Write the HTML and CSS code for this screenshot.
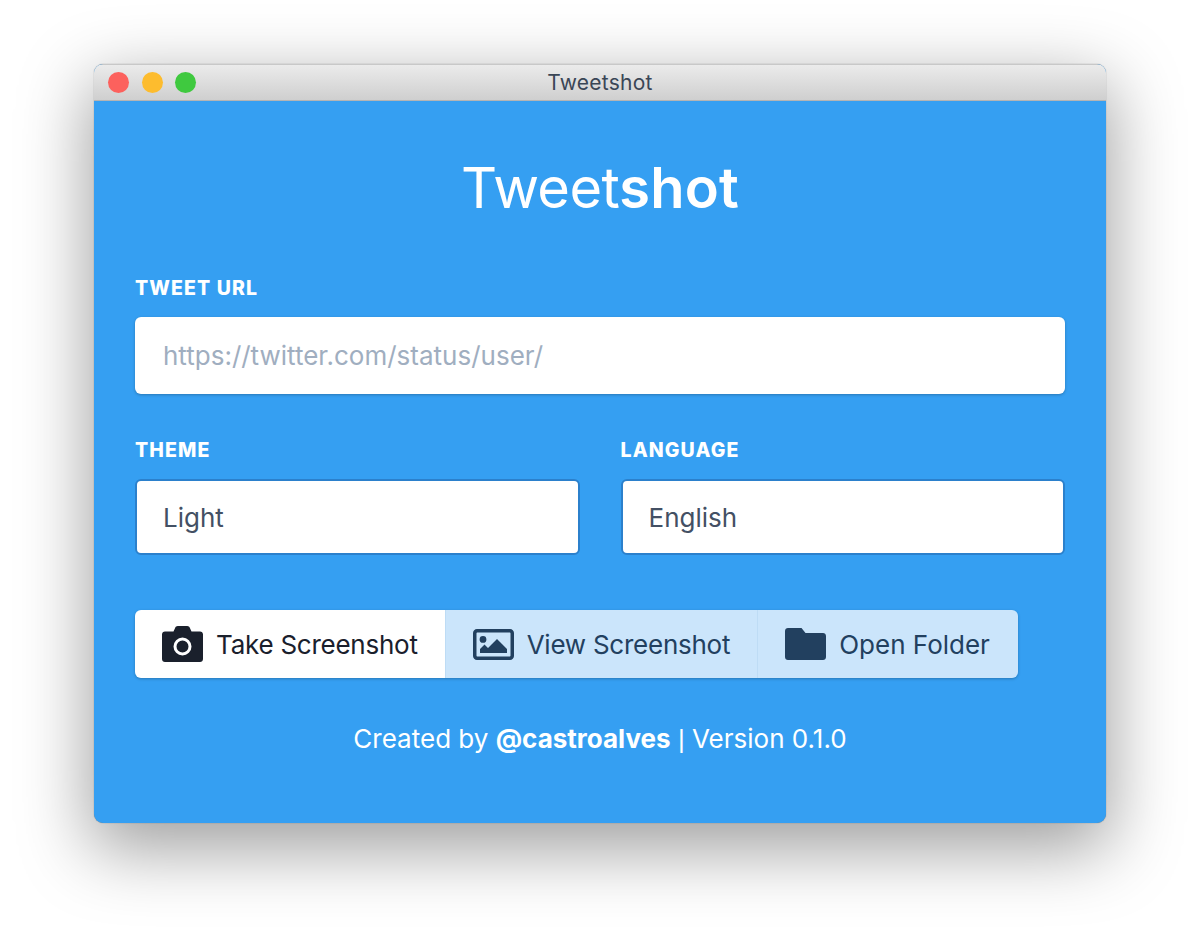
FILE: index.html
```html
<!DOCTYPE html>
<html lang="en">
<head>
<meta charset="utf-8">
<title>Tweetshot</title>
<link rel="stylesheet" href="styles.css">
</head>
<body>
<main class="window">
  <header class="titlebar">
    <div class="lights">
      <span class="light red"></span>
      <span class="light yellow"></span>
      <span class="light green"></span>
    </div>
    <div class="window-title">Tweetshot</div>
  </header>
  <section class="content">
    <h1 class="title">Tweet<span class="title-bold">shot</span></h1>
    <div class="field">
      <label class="label">TWEET URL</label>
      <div class="input url"><span class="placeholder">https://twitter.com/status/user/</span></div>
    </div>
    <div class="row">
      <div class="field">
        <label class="label">THEME</label>
        <div class="input select">Light</div>
      </div>
      <div class="field">
        <label class="label">LANGUAGE</label>
        <div class="input select">English</div>
      </div>
    </div>
    <div class="buttons">
      <button class="btn primary">
        <svg class="icon" viewBox="0 0 41 36"><path fill-rule="evenodd" d="M3 5.500h8.500l1.600-3.600C13.600.7 14.500 0 15.800 0h9.400c1.300 0 2.200.7 2.700 1.900l1.600 3.600H38c1.700 0 3 1.300 3 3V33c0 1.700-1.300 3-3 3H3c-1.700 0-3-1.300-3-3V8.500c0-1.700 1.300-3 3-3zM20.500 11.500a9 9 0 1 0 0 18 9 9 0 0 0 0-18zm0 3a6 6 0 1 1 0 12 6 6 0 0 1 0-12z"/></svg>
        <span class="tight">Take Screenshot</span>
      </button>
      <button class="btn secondary">
        <svg class="icon" viewBox="0 0 41 31"><path fill-rule="evenodd" d="M4 0h33c2.200 0 4 1.800 4 4v23c0 2.200-1.800 4-4 4H4c-2.200 0-4-1.800-4-4V4c0-2.200 1.800-4 4-4zm.5 3.500c-.6 0-1 .4-1 1v22c0 .6.400 1 1 1h32c.6 0 1-.4 1-1v-22c0-.6-.4-1-1-1zM10 7a3.400 3.400 0 1 1 0 6.800A3.400 3.400 0 0 1 10 7zM7 24v-4l4.500-4.500 3.500 3.500 9-9 10 10v4z"/></svg>
        <span class="tight">View Screenshot</span>
      </button>
      <button class="btn secondary">
        <svg class="icon" viewBox="0 0 41 32"><path d="M3 0h13.500l4 5H38c1.700 0 3 1.300 3 3v21c0 1.700-1.300 3-3 3H3c-1.700 0-3-1.300-3-3V3c0-1.700 1.300-3 3-3z"/></svg>
        <span>Open Folder</span>
      </button>
    </div>
    <p class="footer">Created by <strong>@castroalves</strong> <span class="sep">|</span> Version 0.1.0</p>
  </section>
</main>
</body>
</html>
```
FILE: styles.css
```css
* { box-sizing: border-box; }
html, body { margin: 0; height: 100%; }
body {
  padding: 64px 94px 0;
  background: #fff;
  font-family: Inter, "Liberation Sans", sans-serif;
  overflow: hidden;
}
.window {
  width: 1012px;
  height: 759px;
  border-radius: 9px;
  overflow: hidden;
  background: #359ff2;
  position: relative;
  box-shadow: 0 22px 70px 4px rgba(0,0,0,.38), 0 0 1px rgba(0,0,0,.5);
}
.titlebar {
  height: 37px;
  display: flex;
  align-items: center;
  justify-content: center;
  position: relative;
  background: linear-gradient(#ebebeb, #cfcfcf);
  border-top: 1px solid #c8c8c8;
  border-bottom: 1px solid #b4b4b4;
}
.lights { position: absolute; left: 14px; top: 7px; display: flex; gap: 12.500px; }
.light { width: 21px; height: 21px; border-radius: 50%; }
.red { background: #fc615d; }
.yellow { background: #fdbc2e; }
.green { background: #3fc93f; }
.window-title { font-size: 21px; letter-spacing: .25px; color: #3a4656; }
.content { padding: 0 41px; color: #fff; }
.title {
  margin: 47px 0 0;
  height: 80px;
  line-height: 80px;
  text-align: center;
  font-size: 56px;
  font-weight: 400;
  letter-spacing: -.6px;
}
.title-bold { font-weight: 600; letter-spacing: .2px; }
.label {
  display: block;
  font-size: 19.500px;
  line-height: 24px;
  font-weight: 800;
  letter-spacing: 1.100px;
  color: #fff;
  margin-bottom: 17px;
}
.field { flex: 1; }
.content > .field { margin-top: 48px; }
.input {
  display: flex;
  align-items: center;
  height: 77px;
  padding: 0 28px;
  border-radius: 6px;
  background: #fff;
  font-size: 26px;
  color: #435064;
}
.url { box-shadow: 0 1px 3px rgba(0,0,0,.25); }
.placeholder { color: #a0aec0; }
.select { border: 2px solid #2b80cc; padding-left: 26px; height: 76px; }
.row { display: flex; gap: 41px; margin-top: 44px; }
.buttons {
  display: inline-flex;
  margin-top: 55px;
  border-radius: 6px;
  overflow: hidden;
  box-shadow: 0 1px 3px rgba(0,0,0,.25);
}
.btn {
  display: flex;
  align-items: center;
  gap: 13px;
  height: 68px;
  padding: 0 27px;
  border: 0;
  font: inherit;
  font-size: 26px;
}
.btn:last-child { padding-right: 28px; }
.tight { letter-spacing: -.25px; }
.icon { width: 41px; height: auto; fill: currentColor; display: block; }
.primary { background: #fff; color: #1a202c; }
.secondary { background: #cbe5fb; color: #22405f; border-left: 1px solid #bedcf5; }
.footer {
  margin: 43px 0 0;
  text-align: center;
  font-size: 26px;
  line-height: 36px;
  color: #fff;
}
.footer strong { font-weight: 700; }
.sep { font-family: "Liberation Sans", sans-serif; }
```
